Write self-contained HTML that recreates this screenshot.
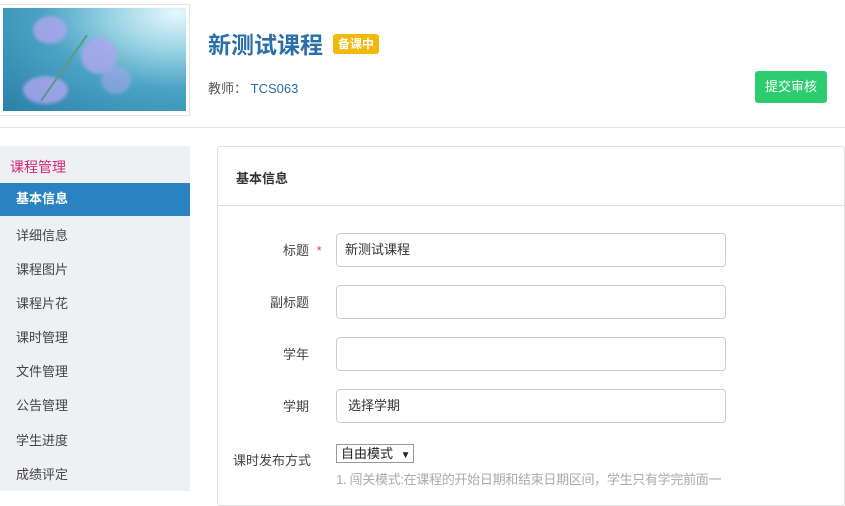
<!DOCTYPE html>
<html><head><meta charset="utf-8"><style>
*{margin:0;padding:0;box-sizing:border-box}
body{width:845px;height:491px;overflow:hidden;background:#fff;font-family:"Liberation Sans","Noto Sans CJK SC",sans-serif;font-size:13px;color:#333;position:relative}
.a{position:absolute}
.imgbox{left:-1px;top:4px;width:191px;height:112px;border:1px solid #e3e3e3;background:#fff}
.img{left:3px;top:8px;width:183px;height:103px;overflow:hidden;background:radial-gradient(ellipse at 95% 5%,#e6f7fb 0%,#9fd6e6 25%,#4aa3c4 55%,#2a7fa8 100%)}
.fl{border-radius:50%;background:rgba(175,165,240,.8);filter:blur(1.5px)}
.tag{left:333px;top:34px;width:46px;height:20px;background:#f0b90b;color:#fff;font-size:12px;line-height:20px;text-align:center;border-radius:3px;font-weight:bold}
.tea{left:208px;top:78px;color:#555}
.tea span{color:#2a6fa8}
.btn{left:755px;top:71px;width:72px;height:32px;background:#2ecc71;color:#fff;border-radius:3px;text-align:center;line-height:32px;font-size:13px}
.hl{left:0;top:127px;width:845px;height:1px;background:#e5e5e5}
.side{left:0;top:146px;width:190px;height:345px;background:#eef0f3}
.st{left:10px;top:157px;color:#d0287a;font-size:14px}
.act{left:0;top:183px;width:190px;height:33px;background:#2a82be;color:#fff;padding-left:16px;line-height:32px;font-weight:bold}
.it{left:16px;color:#444}
.panel{left:217px;top:146px;width:628px;height:360px;border:1px solid #ddd;border-radius:3px}
.ph{left:236px;top:168px;font-weight:bold;color:#333}
.pl{left:218px;top:205px;width:626px;height:1px;background:#ddd}
.lb{right:536px;color:#444;text-align:right}
.in{left:336px;width:390px;height:34px;border:1px solid #ccc;border-radius:4px;padding-left:8px;line-height:32px;color:#333}
.sel{left:336px;top:444px;width:78px;height:19px;border:1px solid #999;font-size:13px;line-height:17px;padding-left:4px;color:#222}
.hint{left:336px;top:469px;color:#aaa;font-size:13px;letter-spacing:-0.3px}
</style></head><body>
<div class="a imgbox"></div>
<div class="a img">
<div class="a fl" style="left:30px;top:8px;width:34px;height:28px"></div>
<div class="a fl" style="left:78px;top:30px;width:36px;height:36px"></div>
<div class="a fl" style="left:98px;top:58px;width:30px;height:28px;opacity:.7"></div>
<div class="a fl" style="left:20px;top:68px;width:45px;height:28px"></div>
<div class="a" style="left:60px;top:20px;width:2px;height:80px;background:#5a9a8a;transform:rotate(35deg)"></div>
</div>
<div class="a" style="left:208px;top:26px;font-size:23px;font-weight:bold;color:#2a6fa8">新测试课程</div>
<div class="a tag">备课中</div>
<div class="a tea">教师： <span>TCS063</span></div>
<div class="a btn">提交审核</div>
<div class="a hl"></div>
<div class="a side"></div>
<div class="a st">课程管理</div>
<div class="a act">基本信息</div>
<div class="a it" style="top:225px">详细信息</div>
<div class="a it" style="top:259px">课程图片</div>
<div class="a it" style="top:293px">课程片花</div>
<div class="a it" style="top:327px">课时管理</div>
<div class="a it" style="top:361px">文件管理</div>
<div class="a it" style="top:395px">公告管理</div>
<div class="a it" style="top:430px">学生进度</div>
<div class="a it" style="top:464px">成绩评定</div>
<div class="a panel"></div>
<div class="a ph">基本信息</div>
<div class="a pl"></div>
<div class="a" style="left:283px;top:240px;color:#444">标题 <span style="color:#d9534f;margin-left:4px">*</span></div>
<div class="a in" style="top:233px">新测试课程</div>
<div class="a lb" style="top:292px">副标题</div>
<div class="a in" style="top:285px"></div>
<div class="a lb" style="top:344px">学年</div>
<div class="a in" style="top:337px"></div>
<div class="a lb" style="top:396px">学期</div>
<div class="a in" style="top:389px;padding-left:11px">选择学期</div>
<div class="a" style="left:233px;top:450px;color:#444">课时发布方式</div>
<div class="a sel">自由模式 <span style="font-size:10px;margin-left:4px">▼</span></div>
<div class="a hint">1. 闯关模式:在课程的开始日期和结束日期区间，学生只有学完前面一</div>
</body></html>
